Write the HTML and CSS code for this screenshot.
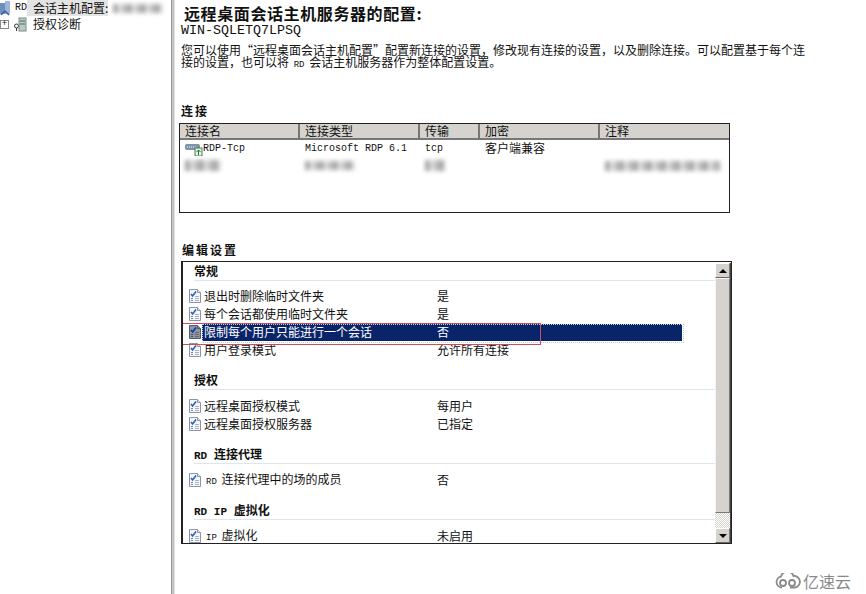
FILE: index.html
```html
<!DOCTYPE html>
<html lang="zh-CN">
<head>
  <meta charset="UTF-8" />
  <title>远程桌面会话主机配置</title>
  <link rel="stylesheet" href="styles.css">
</head>
<body>
  <svg class="defs" width="0" height="0">
    <symbol id="doc" viewBox="0 0 14 16">
      <path d="M1.5 1.5h8l3 3v10h-11z" fill="#f4f7fb" stroke="#8d93a8"/>
      <path d="M9.5 1.5v3h3" fill="#dfe5ef" stroke="#8d93a8"/>
      <path d="M3 6l1.6 2L8 3.5" fill="none" stroke="#2d5fb0" stroke-width="1.6"/>
      <path d="M3 10.5h2M3 12.5h2" stroke="#7d879c"/>
      <path d="M7 8.5h4M7 10.5h4M7 12.5h4" stroke="#a9afbe"/>
    </symbol>
  </svg>

  <aside class="tree">
    <div class="tree-row">
      <svg class="tree-icon" width="11" height="15" viewBox="0 0 11 15">
        <rect x="0" y="2" width="5" height="11" fill="#6d8fc0"/>
        <rect x="5" y="0" width="5" height="13" fill="#9db6d8"/>
        <path d="M1 14l4-4 4 4" fill="none" stroke="#3d5f96" stroke-width="1.5"/>
      </svg>
      <span class="mono tree-rd">RD</span>
      <span class="tree-sel">会话主机配置:</span>
      <span class="blur tree-blur"></span>
    </div>
    <div class="tree-row">
      <span class="expander">+</span>
      <svg class="tree-icon" width="13" height="15" viewBox="0 0 13 15">
        <circle cx="2.5" cy="9" r="2" fill="none" stroke="#333"/>
        <path d="M2.5 11v3" stroke="#333"/>
        <rect x="5" y="1" width="7" height="13" fill="#b9c9c4" stroke="#7c8c88"/>
        <path d="M6 4h5M6 7h5" stroke="#4b6d63"/>
      </svg>
      <span>授权诊断</span>
    </div>
  </aside>
  <div class="splitter"></div>

  <main class="main">
    <h1>远程桌面会话主机服务器的配置:</h1>
    <div class="server mono">WIN-SQLETQ7LPSQ</div>
    <p class="intro">您可以使用“远程桌面会话主机配置”配置新连接的设置&#xFF0C;修改现有连接的设置&#xFF0C;以及删除连接。可以配置基于每个连接的设置&#xFF0C;也可以将 <span class="mono small">RD</span> 会话主机服务器作为整体配置设置。</p>

    <h2 class="conn-title">连接</h2>
    <div class="conn-table">
      <div class="conn-head">
        <span class="col-name">连接名</span>
        <span class="col-type">连接类型</span>
        <span class="col-trans">传输</span>
        <span class="col-enc">加密</span>
        <span class="col-note">注释</span>
      </div>
      <div class="conn-row">
        <span class="col-name">
          <svg width="18" height="14" viewBox="0 0 18 14">
            <rect x="0" y="2" width="15" height="6" rx="2" fill="#7f93a8"/>
            <path d="M2 5h10" stroke="#fff" stroke-dasharray="1 1"/>
            <rect x="10" y="6" width="7" height="8" fill="#e6f2e6" stroke="#4d7a55"/>
            <path d="M13.5 13V8M11.5 10l2-2 2 2" fill="none" stroke="#1e7a34"/>
          </svg>
          <span class="mono">RDP-Tcp</span>
        </span>
        <span class="col-type mono">Microsoft RDP 6.1</span>
        <span class="col-trans mono">tcp</span>
        <span class="col-enc enc-value">客户端兼容</span>
      </div>
      <div class="conn-row">
        <span class="col-name"><span class="blur blur-a"></span></span>
        <span class="col-type"><span class="blur blur-b"></span></span>
        <span class="col-trans"><span class="blur blur-c"></span></span>
        <span class="col-enc"></span>
        <span class="col-note"><span class="blur blur-d"></span></span>
      </div>
    </div>

    <h2 class="edit-title">编辑设置</h2>
    <div class="settings">
      <div class="settings-list">
        <h3 class="first">常规</h3>
        <div class="item"><svg><use href="#doc"/></svg><span class="label">退出时删除临时文件夹</span><span>是</span></div>
        <div class="item"><svg><use href="#doc"/></svg><span class="label">每个会话都使用临时文件夹</span><span>是</span></div>
        <div class="item selected"><svg><use href="#doc"/></svg><span class="label">限制每个用户只能进行一个会话</span><span>否</span></div>
        <div class="item"><svg><use href="#doc"/></svg><span class="label">用户登录模式</span><span>允许所有连接</span></div>
        <h3>授权</h3>
        <div class="item"><svg><use href="#doc"/></svg><span class="label">远程桌面授权模式</span><span>每用户</span></div>
        <div class="item"><svg><use href="#doc"/></svg><span class="label">远程桌面授权服务器</span><span>已指定</span></div>
        <h3><span class="mono">RD</span> 连接代理</h3>
        <div class="item"><svg><use href="#doc"/></svg><span class="label"><span class="mono small">RD</span> 连接代理中的场的成员</span><span>否</span></div>
        <h3><span class="mono">RD IP</span> 虚拟化</h3>
        <div class="item"><svg><use href="#doc"/></svg><span class="label"><span class="mono small">IP</span> 虚拟化</span><span>未启用</span></div>
      </div>
      <div class="scrollbar">
        <div class="sb-btn"><i class="arrow-up"></i></div>
        <div class="sb-thumb"></div>
        <div class="sb-track"></div>
        <div class="sb-btn"><i class="arrow-down"></i></div>
      </div>
      <div class="red-mark"></div>
    </div>
  </main>

  <div class="watermark">
    <svg width="26" height="16" viewBox="0 0 26 16">
      <path d="M7 14.5a5.5 5.500 0 0 1-1-10.900A6.500 6.500 0 0 1 18.500 3a5.800 5.800 0 0 1 1.500 11.500H15" fill="none" stroke="#8a8a8a" stroke-width="1.800"/>
      <circle cx="8" cy="10" r="3" fill="none" stroke="#8a8a8a" stroke-width="1.800"/>
      <circle cx="17" cy="10" r="3" fill="none" stroke="#8a8a8a" stroke-width="1.800"/>
    </svg>
    <span>亿速云</span>
  </div>
</body>
</html>
```

FILE: styles.css
```css
* { box-sizing: border-box; margin: 0; padding: 0; }

body {
  width: 866px;
  height: 594px;
  overflow: hidden;
  display: flex;
  position: relative;
  background: #fff;
  color: #111;
  font-family: "Noto Sans CJK SC", "Liberation Sans", sans-serif;
  font-size: 12px;
  line-height: 16px;
}

.defs { position: absolute; }
.mono { font-family: "Liberation Mono", "Noto Sans CJK SC", monospace; font-size: 10px; }
.small { font-size: 9px; margin: 0 2px; }

.blur {
  display: inline-block;
  background: repeating-linear-gradient(90deg, #8a8a8a 0 5px, #d8d8d8 5px 9px, #a8a8a8 9px 14px);
  filter: blur(2px);
  opacity: 0.75;
}

/* left tree */
.tree { width: 171px; flex: none; }
.tree-row { height: 16px; display: flex; align-items: center; white-space: nowrap; }
.tree-icon { flex: none; }
.tree-rd { margin-left: 4px; }
.tree-sel { background: #e4e4e4; padding-left: 6px; }
.tree-blur { width: 50px; height: 9px; margin-left: 5px; }
.expander {
  width: 9px;
  height: 9px;
  margin: 0 5px 0 0;
  border: 1px solid #888;
  font: 9px/7px "Liberation Mono", monospace;
  text-align: center;
}
.tree-row .expander + .tree-icon { margin-right: 6px; }

.splitter {
  width: 4px;
  flex: none;
  background: #c4c4c4;
  border-left: 1px solid #999;
  border-right: 1px solid #ddd;
}

/* right side */
.main { flex: 1; padding-left: 4px; min-width: 0; }

h1 {
  font-size: 16px;
  line-height: 20px;
  margin: 3px 0 0 5px;
  letter-spacing: 0.6px;
}
.server { font-size: 13.33px; line-height: 16px; margin: 0 0 0 2px; }
.intro {
  width: 626px;
  margin: 5px 0 0 2px;
  line-height: 12px;
}

h2 { font-size: 12px; line-height: 14px; letter-spacing: 2px; }
.conn-title { margin: 33px 0 0 2px; }
.edit-title { margin: 30px 0 0 3px; }

.conn-table {
  width: 551px;
  height: 90px;
  margin-top: 5px;
  border: 1px solid #222;
}
.conn-head {
  display: flex;
  height: 16px;
  background: #d6d3ce;
  border-bottom: 2px solid #777;
  line-height: 14px;
}
.conn-head span {
  padding-left: 5px;
  border-right: 2px solid #777;
}
.conn-head .col-note { border-right: 0; }
.conn-row { display: flex; height: 17px; align-items: center; line-height: 16px; }
.conn-row span { white-space: nowrap; }
.conn-row > span { padding-left: 5px; display: flex; align-items: center; }
.conn-row svg { flex: none; }
.conn-row .enc-value { padding-bottom: 2px; }

.col-name { width: 120px; flex: none; }
.col-type { width: 120px; flex: none; }
.col-trans { width: 60px; flex: none; }
.col-enc { width: 120px; flex: none; }
.col-note { flex: 1; }

.blur-a { width: 36px; height: 11px; }
.blur-b { width: 50px; height: 9px; }
.blur-c { width: 20px; height: 11px; }
.blur-d { width: 115px; height: 10px; }

/* settings list */
.settings {
  position: relative;
  display: flex;
  width: 551px;
  height: 283px;
  margin: 4px 0 0 2px;
  border: 1px solid #222;
  border-left-width: 2px;
  overflow: hidden;
}
.settings-list { flex: 1; min-width: 0; }

h3 {
  height: 19px;
  margin: 12px 0 7px 11px;
  font-size: 12px;
  line-height: 17px;
  border-bottom: 1px solid #dce6ee;
}
h3.first { margin-top: 0; margin-bottom: 6px; }
h3 .mono { font-size: 11px; font-weight: bold; margin-right: 4px; }

.item {
  display: flex;
  align-items: center;
  height: 18px;
  padding-left: 5px;
  white-space: nowrap;
}
.item svg { width: 14px; height: 16px; flex: none; margin-right: 2px; }
.item .label { width: 233px; flex: none; }
.item.selected {
  position: relative;
  width: 499px;
  color: #fff;
  background: linear-gradient(#0a246a, #0a246a) no-repeat 19px 1px / 480px 17px;
}
.item.selected::after {
  content: "";
  position: absolute;
  left: 19px;
  top: 1px;
  width: 480px;
  height: 17px;
  border: 1px dotted #c8cde0;
}
.item.selected svg { filter: brightness(0.6) saturate(2.5); }

.scrollbar {
  width: 16px;
  flex: none;
  display: flex;
  flex-direction: column;
  border-right: 1px solid #444;
  margin-top: 1px;
}
.sb-btn {
  height: 15px;
  flex: none;
  display: flex;
  align-items: center;
  justify-content: center;
  background: #d6d3ce;
  border: 1px solid #fff;
  border-right-color: #777;
  border-bottom-color: #666;
}
.sb-thumb {
  height: 235px;
  flex: none;
  background: #d6d3ce;
  border: 1px solid #f4f4f4;
  border-right-color: #777;
  border-bottom-color: #777;
}
.sb-track {
  flex: 1;
  background: repeating-conic-gradient(#d6d3ce 0 25%, #fff 0 50%) 0 0 / 2px 2px;
}
.arrow-up, .arrow-down {
  width: 0;
  height: 0;
  border-left: 4px solid transparent;
  border-right: 4px solid transparent;
}
.arrow-up { border-bottom: 4px solid #000; }
.arrow-down { border-top: 4px solid #000; }

/* red box someone drew over the screenshot */
.red-mark {
  position: absolute;
  left: -3px;
  top: 61px;
  width: 361px;
  height: 22px;
  border: 1px solid #c8505a;
}

.watermark {
  position: absolute;
  left: 775px;
  top: 572px;
  display: flex;
  align-items: center;
  gap: 2px;
  color: #8a8a8a;
  font-size: 16px;
  line-height: 18px;
}
```
